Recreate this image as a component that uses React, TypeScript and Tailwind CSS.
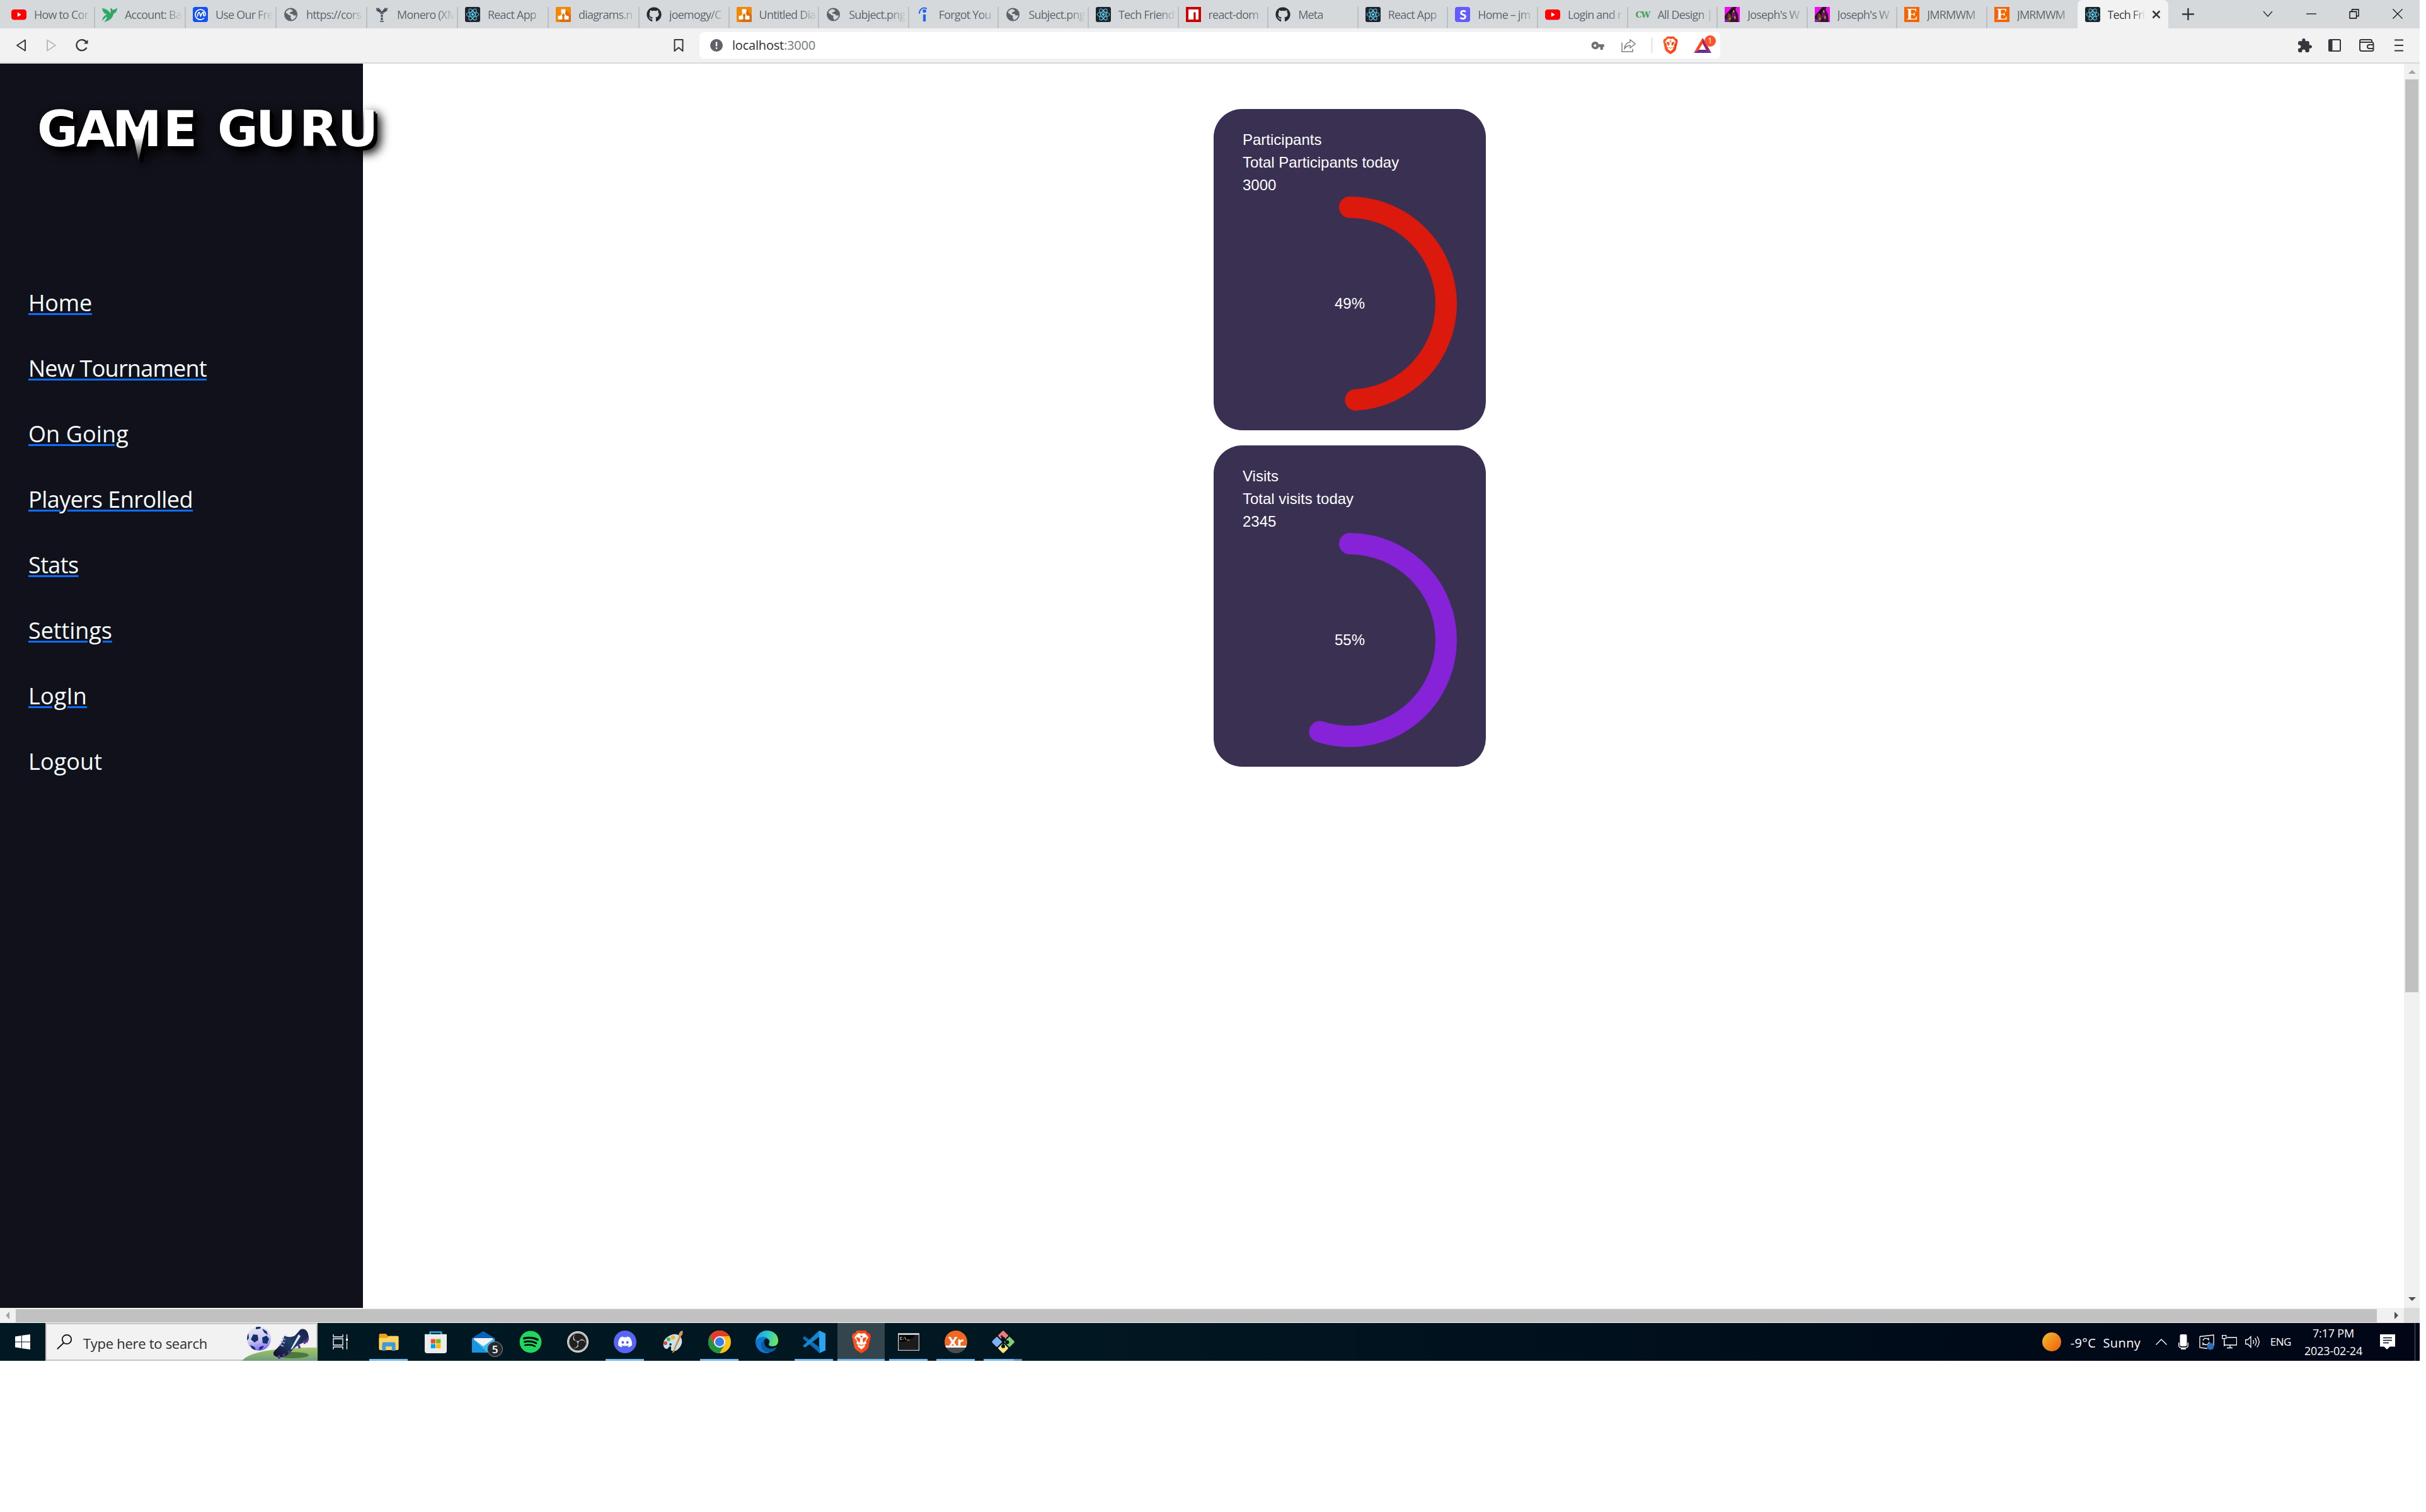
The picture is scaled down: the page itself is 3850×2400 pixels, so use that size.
import React from "react";
import { FaGithub, FaSpotify, FaDiscord } from "react-icons/fa";
import { MdExtension } from "react-icons/md";
import { SiObsstudio } from "react-icons/si";

type IconProps = { className?: string };

const YouTube = () => (
  <svg viewBox="0 0 24 24" className="size-6">
    <rect x="0" y="4" width="24" height="16.5" rx="4.5" fill="#f00" />
    <path d="M9.8 8.6v7.2l6-3.6z" fill="#fff" />
  </svg>
);

const Bird = () => (
  <svg viewBox="0 0 24 24" className="size-6" fill="#2fa866">
    <path d="M0 2c6 1 10 3 13 8 1-3 1-5 0-7 2-2 4 0 3 2l4-1c3-1 4-3 4-3 0 6-3 9-6 10-1 6-5 11-15 13 4-4 5-6 4-9C5 18 3 19 0 22c1-6 4-9 8-10C3 11 1 7 0 2z" />
  </svg>
);

const Coin = () => (
  <svg viewBox="0 0 24 24" className="size-6">
    <rect width="24" height="24" rx="4" fill="#1652f0" />
    <path d="M17.500 18A8 8 0 1 1 20 12c0 2.600-3 3-3 .4V10c0-1.800-1.500-1.800-2-.5l-2.600 5-1.600-5c-.5-1.300-1.600-1.200-2 0L7.300 14.600" fill="none" stroke="#fff" strokeWidth="1.700" strokeLinecap="round" />
  </svg>
);

const Globe = () => (
  <svg viewBox="0 0 24 24" className="size-6">
    <circle cx="11.500" cy="12" r="10.500" fill="#5f6368" />
    <path d="M3.500 8.500c1-2.500 4-4.800 6.500-5 2 .5 4 1 4.500 2.500-.5 2-3 1.500-4.500 3-.5 1.500.5 2 2 2 2.500 0 3.500 1 3.500 2.500H20c-.5 3-3 6.500-6.500 7-2-.3-1-2-2.500-3.500 0-1.500 1-2 .5-3-1.500-.8-3-.5-4-2-1.500-1.800-3-1.500-4-3.500z" fill="#d5d9dc" />
  </svg>
);

const Tree = () => (
  <svg viewBox="0 0 24 24" className="size-6" fill="none" stroke="#45525e">
    <path d="M3 2l7 6M21 2l-7 6M6 1.500l5 6M18 1.500l-5 6M3.500 5l6 3.500M20.500 5l-6 3.500" strokeWidth="1.800" />
    <path d="M12 7v16" strokeWidth="3" strokeDasharray="4 1" />
    <path d="M9 23h6M9 10h6" strokeWidth="1.500" />
  </svg>
);

const ReactMark = () => (
  <svg viewBox="0 0 24 24" className="size-6">
    <rect width="24" height="24" rx="3" fill="#20232a" />
    <g fill="none" stroke="#61dafb" strokeWidth="1">
      <ellipse cx="12" cy="12" rx="10" ry="3.900" />
      <ellipse cx="12" cy="12" rx="10" ry="3.900" transform="rotate(60 12 12)" />
      <ellipse cx="12" cy="12" rx="10" ry="3.900" transform="rotate(120 12 12)" />
    </g>
    <circle cx="12" cy="12" r="2" fill="#61dafb" />
  </svg>
);

const Diagrams = () => (
  <svg viewBox="0 0 24 24" className="size-6">
    <rect width="24" height="24" rx="1.500" fill="#f08705" />
    <path d="M15 4l9 9v9.500a1.500 1.500 0 0 1-1.500 1.500H8l-4-4z" fill="#df6c0c" />
    <path d="M12 8L7 16M12 8l5 8" stroke="#fff" strokeWidth="1.800" />
    <rect x="8.500" y="3.500" width="7" height="6" rx="1" fill="#fff" />
    <rect x="3.500" y="14" width="7" height="6" rx="1" fill="#fff" />
    <rect x="13.500" y="14" width="7" height="6" rx="1" fill="#fff" />
  </svg>
);

const Indeed = () => (
  <svg viewBox="0 0 24 24" className="size-6" fill="none" stroke="#2164f3">
    <path d="M5 10C5 5 10-.5 16 2.500" strokeWidth="2" strokeLinecap="round" />
    <circle cx="13" cy="6.500" r="2.800" fill="#2164f3" stroke="none" />
    <path d="M13 12v11" strokeWidth="4.200" />
  </svg>
);

const Npm = () => (
  <svg viewBox="0 0 24 24" className="size-6">
    <rect width="24" height="24" fill="#cb0000" />
    <path d="M4 4h16v16h-4.500V8.500h-3.200V20H4z" fill="#fff" />
  </svg>
);

const Stripe = () => (
  <span className="flex size-6 items-center justify-center rounded-[4px] bg-[#635bff] font-['Lato'] text-[20px] leading-none font-black text-white">S</span>
);

const CW = () => (
  <span className="flex size-6 items-center justify-center font-['DejaVu_Serif'] text-[13px] leading-none font-bold tracking-[-1.500px] text-[#3f9f58]">CW</span>
);

const Joseph = () => (
  <svg viewBox="0 0 24 24" className="size-6">
    <rect width="24" height="24" fill="#35142c" />
    <path d="M0 0h12L8 5 3 10 0 15zM19 0h5v24h-2l-1-12-4-8z" fill="#f20cf0" />
    <path d="M8 6l4-3 5 2-1 5-5 3-4 5-2-4z" fill="#1b0b12" />
    <path d="M11 8l4-1 3 6-3 6-4-3z" fill="#6e1570" />
    <path d="M5 10l4 1 2 6-3 6H4z" fill="#6b3f28" />
    <path d="M13 5l3 1-1 3-2-1zM7 17l3 1-2 4zM15 14l3 2-2 5z" fill="#c9965a" />
    <path d="M0 18l5 3 3 3H0z" fill="#8a1ab0" />
  </svg>
);

const Etsy = () => (
  <span className="flex size-6 items-center justify-center bg-[#f56400] font-['Liberation_Serif'] text-[26px] leading-none font-bold text-white">E</span>
);

const GitHub = () => <FaGithub className="size-6 text-[#24292f]" />;

const tabs: { title: string; icon: React.FC; wide?: boolean; last?: boolean }[] = [
  { title: "How to Cor", icon: YouTube, wide: true },
  { title: "Account: Ba", icon: Bird, wide: true },
  { title: "Use Our Fre", icon: Coin, wide: true },
  { title: "https://cors", icon: Globe, wide: true },
  { title: "Monero (XM", icon: Tree, wide: true },
  { title: "React App", icon: ReactMark, wide: true },
  { title: "diagrams.n", icon: Diagrams, wide: true },
  { title: "joemogy/C", icon: GitHub },
  { title: "Untitled Dia", icon: Diagrams },
  { title: "Subject.png", icon: Globe },
  { title: "Forgot You", icon: Indeed },
  { title: "Subject.png", icon: Globe },
  { title: "Tech Friend", icon: ReactMark },
  { title: "react-dom", icon: Npm },
  { title: "Meta", icon: GitHub },
  { title: "React App", icon: ReactMark },
  { title: "Home – jm", icon: Stripe },
  { title: "Login and r", icon: YouTube },
  { title: "All Design |", icon: CW },
  { title: "Joseph's W", icon: Joseph },
  { title: "Joseph's W", icon: Joseph },
  { title: "JMRMWM", icon: Etsy },
  { title: "JMRMWM", icon: Etsy, last: true },
];

function TabStrip() {
  return (
    <div className="flex h-[45px] shrink-0 bg-[#d5d9dc] pl-[7px] text-[18px] tracking-[-0.045em] text-[#5f6468]">
      {tabs.map((t, i) => (
        <div
          key={i}
          className={`mt-[11px] flex h-[34px] shrink-0 items-start pl-[11px] ${t.wide ? "w-[144px]" : "w-[142.600px]"} ${t.last ? "" : "border-r-2 border-[#bcc0c3]"}`}
        >
          <t.icon />
          <span className="ml-[12px] h-6 w-[92px] shrink-0 overflow-hidden leading-6 whitespace-nowrap [mask-image:linear-gradient(to_right,black_70%,transparent_100%)]">{t.title}</span>
        </div>
      ))}
      <div className="flex h-[45px] w-[144px] shrink-0 items-start rounded-t-[8px] bg-[#f2f2f2] pt-[11px] pl-[12px] text-[#33383c]">
        <ReactMark />
        <span className="ml-[12px] h-6 w-[60px] overflow-hidden leading-6 whitespace-nowrap [mask-image:linear-gradient(to_right,black_65%,transparent)]">Tech Fri</span>
        <svg viewBox="0 0 14 14" className="mt-[5px] ml-[10px] size-[14px]" stroke="#33383c" strokeWidth="2.500"><path d="M1.500 1.500l11 11M12.500 1.500l-11 11" /></svg>
      </div>
      <svg viewBox="0 0 20 20" className="mt-[13px] ml-[22px] size-[19px] shrink-0" stroke="#33383c" strokeWidth="2.600"><path d="M10 0v20M0 10h20" /></svg>
      <div className="mr-[27px] ml-auto flex h-[43px] items-center gap-[52.600px]">
        <svg viewBox="0 0 16 16" className="size-4" fill="none" stroke="#222" strokeWidth="1.200"><path d="M1 4l7 8 7-8" /></svg>
        <svg viewBox="0 0 16 16" className="size-4" stroke="#000" strokeWidth="1.200"><path d="M0 8h16" /></svg>
        <svg viewBox="0 0 16 16" className="size-4" fill="none" stroke="#000" strokeWidth="1.300"><path d="M1 4.500h10.500V15H1zM4.500 4.500V1H15v10.500h-3.500" /></svg>
        <svg viewBox="0 0 16 16" className="size-4" stroke="#000" strokeWidth="1.200"><path d="M.5.5l15 15M15.500.5l-15 15" /></svg>
      </div>
    </div>
  );
}

const BraveLion = ({ className }: IconProps) => (
  <svg viewBox="0 0 30 36" className={className}>
    <defs>
      <linearGradient id="lion" x1="0" y1="0" x2="1" y2="0"><stop stopColor="#ff5a1f" /><stop offset="1" stopColor="#ff3a0a" /></linearGradient>
    </defs>
    <path d="M8 0h14l3 4 3.500 1L30 10l-1 3-3 14-3 4-8 5-8-5-3-4L1 13l-1-3 1.500-5L5 4z" fill="url(#lion)" />
    <path d="M15 5l5-1 4 4 2 3-4 6 1 3-3 3 1 2-6 5-6-5 1-2-3-3 1-3-4-6 2-3 4-4z" fill="#fff" />
    <path d="M6.500 10.500l6 1.200.5 3.300-1 4.500-3.500-4zM23.500 10.500l-6 1.200-.5 3.300 1 4.500 3.500-4zM10.500 21.500l4.500 1.500 4.500-1.500-1.500 1.800-3 1.200-3-1.200zM13 8l2 .5L17 8l-1 3h-2z" fill="#ff4b15" />
  </svg>
);

function Toolbar() {
  return (
    <div className="flex h-[56px] shrink-0 items-center border-b-2 border-[#d5d9dc] bg-[#f2f2f2] pl-[25px] text-[#33383c]">
      <svg viewBox="0 0 16 20" className="h-5 w-4" fill="none" stroke="currentColor" strokeWidth="2" strokeLinejoin="round"><path d="M15 1.500v17L2 10z" /></svg>
      <svg viewBox="0 0 16 20" className="ml-[33px] h-5 w-4" fill="none" stroke="#b9bbbd" strokeWidth="2" strokeLinejoin="round"><path d="M1 1.500v17L14 10z" /></svg>
      <svg viewBox="0 0 20 20" className="ml-[30px] size-5" fill="none" stroke="currentColor" strokeWidth="2.300"><path d="M17.500 13.500A8.500 8.500 0 1 1 17 5" /><path d="M13 7.500h6.500V1z" fill="currentColor" stroke="none" /></svg>
      <svg viewBox="0 0 16 20" className="ml-[929px] h-5 w-4" fill="none" stroke="currentColor" strokeWidth="2" strokeLinejoin="round"><path d="M1.500 1h13v18L8 13.500 1.500 19z" /></svg>
      <div className="ml-[25px] flex h-[42px] w-[1620px] shrink-0 items-center rounded-[7px] bg-white pl-[17px]">
        <svg viewBox="0 0 20 20" className="size-5"><circle cx="10" cy="10" r="10" fill="#5f6368" /><path d="M10 4.500v7M10 13.300v2.400" stroke="#fff" strokeWidth="2.400" /></svg>
        <span className="ml-[15px] text-[20px] tracking-[-0.010em] text-[#2a2e32]">localhost<span className="text-[#75797c]">:3000</span></span>
        <svg viewBox="0 0 22 14" className="ml-auto h-[13px] w-[21px]" fill="#6e7276"><path fillRule="evenodd" d="M6.500 0a6.500 6.500 0 0 1 6.200 4.500H22v4.600h-2V14h-4.600V9.300h-2.700A6.500 6.500 0 1 1 6.500 0zm0 4.500a2.300 2.300 0 1 0 0 4.600 2.300 2.300 0 0 0 0-4.600z" /></svg>
        <svg viewBox="0 0 23 21" className="ml-[27px] h-[21px] w-[23px]" fill="none" stroke="#7a7e82" strokeWidth="1.500"><path d="M1 5.500V20h17v-4.500M14 1l8 6.500-8 6.500v-3.800c-4 0-6.500 1.500-9 5C5.500 9 9 5.500 14 4.800z" /></svg>
        <span className="ml-[25px] h-6 w-px bg-[#c8cacc]" />
        <BraveLion className="ml-[17px] h-[28px] w-[24px]" />
        <div className="relative mr-[14px] ml-[25px] h-6 w-[28px]">
          <svg viewBox="0 0 28 24" className="h-6 w-[28px]"><path d="M14 0L0 24l8-5 6-10z" fill="#ff4724" /><path d="M0 24h28l-8.500-5H8z" fill="#662d91" /><path d="M14 0l14 24-8.500-5L14 9z" fill="#9e1f63" /></svg>
          <span className="absolute -top-[4px] left-[17px] flex size-[18px] items-center justify-center rounded-full bg-[#fb542b] text-[12px] leading-none text-white">1</span>
        </div>
      </div>
      <div className="mr-[26px] ml-auto flex items-center">
        <MdExtension className="size-[25px]" />
        <svg viewBox="0 0 20 20" className="ml-[25px] size-5" fill="none" stroke="currentColor" strokeWidth="2"><rect x="1" y="1" width="18" height="18" rx="1.500" /><path d="M4 1v18" strokeWidth="5" /></svg>
        <svg viewBox="0 0 24 20" className="ml-[29px] h-5 w-6" fill="none" stroke="currentColor" strokeWidth="2"><path d="M1 3v13a3 3 0 0 0 3 3h16a2.500 2.500 0 0 0 2.500-2.500v-9A2.500 2.500 0 0 0 20 5H3a2 2 0 0 1 0-4h15a2 2 0 0 1 2 2v2M23 9h-7a3 3 0 0 0 0 6h7" /></svg>
        <svg viewBox="0 0 14 20" className="ml-[32px] h-5 w-[14px]" stroke="currentColor" strokeWidth="2"><path d="M0 1.500h14M0 10h14M0 18.500h14" /></svg>
      </div>
    </div>
  );
}

const links = [
  { label: "Home", tracking: "tracking-[-0.2px]" },
  { label: "New Tournament", tracking: "tracking-[-0.75px]" },
  { label: "On Going", tracking: "tracking-[0.1px]" },
  { label: "Players Enrolled", tracking: "tracking-[-0.5px]" },
  { label: "Stats", tracking: "tracking-[-0.6px]" },
  { label: "Settings", tracking: "tracking-[-0.1px]" },
  { label: "LogIn", tracking: "tracking-[0.2px]" },
];

function Sidebar() {
  return (
    <aside className="h-full w-[576px] shrink-0 bg-[#11111b]">
      <svg viewBox="0 0 640 200" className="h-[200px] w-[640px] overflow-visible">
        <defs>
          <linearGradient id="spike" x1="0" y1="0" x2="0" y2="1">
            <stop offset="0.300" stopColor="#fff" />
            <stop offset="1" stopColor="#222" />
          </linearGradient>
        </defs>
        <g className="[filter:drop-shadow(3px_3px_0_#000)_drop-shadow(3px_3px_0_#000)_drop-shadow(5px_5px_8px_#000)]">
          <path d="M209 100h22l-11 55z" fill="url(#spike)" />
          <text y="131" x="59 121 178 259 345 406 475 536" fill="#fff" className="font-['DejaVu_Sans'] text-[79px] font-bold">GAMEGURU</text>
        </g>
      </svg>
      <nav className="mt-[153px] flex flex-col items-start gap-[50px] pl-[45px] text-[36px] text-[#f5ffff]">
        {links.map((l) => (
          <a key={l.label} className={`h-[54px] leading-[54px] underline decoration-[#0d6efd] decoration-[3px] underline-offset-[3px] ${l.tracking}`}>{l.label}</a>
        ))}
        <span className="h-[54px] leading-[54px] tracking-[0.1px]">Logout</span>
      </nav>
    </aside>
  );
}

function StatCard({ title, caption, value, percent, color }: { title: string; caption: string; value: string; percent: number; color: string }) {
  const length = 2 * Math.PI * 153;
  return (
    <section className="h-[510px] w-[432px] rounded-[45px] bg-[#3a3052] px-[46px] pt-[31px] font-['Liberation_Sans'] text-[24px] leading-9 text-white">
      <p>{title}</p>
      <p>{caption}</p>
      <p>{value}</p>
      <div className="grid place-items-center *:[grid-area:1/1]">
        <svg viewBox="0 0 340 340" className="size-[340px] -rotate-90">
          <circle cx="170" cy="170" r="153" fill="none" stroke={color} strokeWidth="34" strokeLinecap="round" strokeDasharray={`${(length * percent) / 100} ${length}`} />
        </svg>
        <span>{percent}%</span>
      </div>
    </section>
  );
}

function VerticalScrollbar() {
  return (
    <div className="flex w-[25px] shrink-0 flex-col items-center bg-[#f1f1f1]">
      <svg viewBox="0 0 12 6" className="mt-[10px] h-[6px] w-3 shrink-0" fill="#a3a3a3"><path d="M0 6l6-6 6 6z" /></svg>
      <div className="mt-[9px] h-[1449px] w-[21px] bg-[#c1c1c1]" />
      <svg viewBox="0 0 12 6" className="mt-auto mb-[11px] h-[6px] w-3 shrink-0" fill="#505050"><path d="M0 0h12L6 6z" /></svg>
    </div>
  );
}

function HorizontalScrollbar() {
  return (
    <div className="flex h-6 shrink-0 items-center bg-[#f1f1f1]">
      <svg viewBox="0 0 6 12" className="ml-[9px] h-3 w-[6px]" fill="#a3a3a3"><path d="M6 0v12L0 6z" /></svg>
      <div className="ml-[10px] h-[21px] w-[3747px] bg-[#c1c1c1]" />
      <svg viewBox="0 0 6 12" className="ml-[28px] h-3 w-[6px]" fill="#505050"><path d="M0 0v12l6-6z" /></svg>
      <div className="ml-auto h-6 w-[25px] bg-[#dcdcdc]" />
    </div>
  );
}

const Folder = ({ className }: IconProps) => (
  <svg viewBox="0 0 32 28" className={className}>
    <path d="M0 2a2 2 0 0 1 2-2h9l4 4h15a2 2 0 0 1 2 2v19H0z" fill="#e8a317" />
    <path d="M0 7h13l4-3h15v21a2 2 0 0 1-2 2H2a2 2 0 0 1-2-2z" fill="#fed45f" />
    <path d="M5 28V17a3 3 0 0 1 3-3h16a3 3 0 0 1 3 3v11h-6v-7H11v7z" fill="#3f97dc" />
  </svg>
);
const Store = ({ className }: IconProps) => (
  <svg viewBox="0 0 36 36" className={className}>
    <path d="M9 7V1.500h18V7" fill="none" stroke="#29a9ea" strokeWidth="2.600" />
    <path d="M0 5h36v27a4 4 0 0 1-4 4H4a4 4 0 0 1-4-4z" fill="#ececec" />
    <path d="M10 13h7.500v7H10z" fill="#f25022" /><path d="M18.500 13H26v7h-7.500z" fill="#7fba00" />
    <path d="M10 21h7.500v7H10z" fill="#00a4ef" /><path d="M18.500 21H26v7h-7.500z" fill="#ffb900" />
  </svg>
);
const Mail = ({ className }: IconProps) => (
  <svg viewBox="0 0 36 34" className={className}>
    <path d="M0 11L18 0l18 11v10H0z" fill="#0a63b8" />
    <path d="M3 11h30v10L18 26 3 20z" fill="#f3f3f3" />
    <path d="M0 11l18 13 18-13v23H0z" fill="#35bdf3" />
    <path d="M0 34V11l25 23z" fill="#1b93e0" />
  </svg>
);
const Paint = ({ className }: IconProps) => (
  <svg viewBox="0 0 36 36" className={className}>
    <path d="M16 7c10-4 19 3 17 13-2 8-10 15-16 12-3-2 1-5-2-7-3-1-3 5-7 4-5-1-9-15 8-22z" fill="#c5e3f1" />
    <circle cx="7" cy="20" r="3" fill="#e04235" /><circle cx="12" cy="14" r="3" fill="#51ae50" /><circle cx="19" cy="11" r="3.300" fill="#f3b51d" /><circle cx="15" cy="22" r="2" fill="#16384d" />
    <path d="M29 8l3 1-12 26-2 1 1-4z" fill="#e88a25" /><path d="M28 8c0-4 2-7 6-8 1 2 1 6-2 9z" fill="#c79a62" />
  </svg>
);
const Chrome = ({ className }: IconProps) => (
  <svg viewBox="0 0 36 36" className={className}>
    <circle cx="18" cy="18" r="18" fill="#fbc116" />
    <path d="M2.400 9A18 18 0 0 0 18 36l7.800-13.500H10.200z" fill="#229342" />
    <path d="M2.400 9l7.800 13.500L18 9h15.600A18 18 0 0 0 2.400 9z" fill="#e33b2e" />
    <circle cx="18" cy="18" r="9" fill="#fff" /><circle cx="18" cy="18" r="7.200" fill="#3a7cec" />
  </svg>
);
const Edge = ({ className }: IconProps) => (
  <svg viewBox="0 0 36 36" className={className}>
    <defs>
      <linearGradient id="edgeTop" x1="0" y1="0.300" x2="1" y2="0.500"><stop stopColor="#1d9fe3" /><stop offset="0.500" stopColor="#2cc5d2" /><stop offset="1" stopColor="#6fe757" /></linearGradient>
    </defs>
    <path d="M0 18C1 7 9 0 18 0c11 0 18 7 18 16 0 6-4 9-9 9-4 0-6-1-6-3s2-2 1-6c-2-5-12-7-22 2z" fill="url(#edgeTop)" />
    <path d="M0 18c3-8 13-10 19-6-6 1-10 7-7 14 3 6 8 8 11 9C11 39 0 30 0 18z" fill="#0f78d0" />
    <path d="M15 14c-5 2-8 8-5 14 4 9 17 9 23 0 1-1 0-2-1-1-6 3-14 2-17-3-1-4-2-7 0-10z" fill="#0c59a4" />
  </svg>
);
const Code = ({ className }: IconProps) => (
  <svg viewBox="0 0 36 36" className={className}>
    <path d="M26 0l10 4.500v27L26 36z" fill="#2aa4ee" />
    <path d="M0 11.500l3-2.500 24 18v9L1 13.500z" fill="#0a6fb8" />
    <path d="M0 24.500L26 0v10L3.500 27z" fill="#1287d0" />
  </svg>
);
const Terminal = ({ className }: IconProps) => (
  <svg viewBox="0 0 34 28" className={className}>
    <rect width="34" height="28" fill="#c3c6c9" /><rect x="1.500" y="3" width="31" height="23.500" fill="#000" />
    <path d="M1.500 14C14 14 22 10 28 3h4.500v23.500h-31z" fill="#1b1b1b" />
    <path d="M6.500 6.500H4v4h2.500M8.500 7.500v.8M8.500 9.800v.8M10.500 6l2.500 5M14.500 11h4" stroke="#ddd" fill="none" />
  </svg>
);
const Xr = ({ className }: IconProps) => (
  <span className={`flex items-center justify-center overflow-hidden rounded-full bg-[linear-gradient(#f26822_0_68%,#fff_68%_76%,#4c4c4c_76%)] font-['Open_Sans'] text-[23px] leading-none font-bold tracking-[-1px] text-white ${className}`}>Xr</span>
);
const GitBash = ({ className }: IconProps) => (
  <svg viewBox="0 0 36 36" className={className}>
    <g transform="rotate(45 18 18)">
      <rect x="5" y="5" width="12.500" height="12.500" rx="2" fill="#f07a80" /><rect x="18.500" y="5" width="12.500" height="12.500" rx="2" fill="#f07a80" />
      <path d="M18.500 5H29a2 2 0 0 1 2 2v10.500H18.500z" fill="#80d070" />
      <rect x="5" y="18.500" width="12.500" height="12.500" rx="2" fill="#7fb2f5" /><rect x="18.500" y="18.500" width="12.500" height="12.500" rx="2" fill="#fde47c" />
    </g>
    <path d="M9 9l18 18M27 9L9 27" stroke="#01151e" strokeWidth="2" />
    <path d="M15 8l3 5v11M18 13l6 5" stroke="#01151e" strokeWidth="2.500" fill="none" />
    <circle cx="18" cy="13" r="3" fill="#01151e" /><circle cx="24.500" cy="18.500" r="3" fill="#01151e" /><circle cx="18" cy="25" r="3" fill="#01151e" />
  </svg>
);
const Spotify = ({ className }: IconProps) => (
  <span className={`flex items-center justify-center rounded-full bg-black ${className}`}><FaSpotify className="size-full text-[#1ed760]" /></span>
);
const Obs = ({ className }: IconProps) => (
  <span className={`flex items-center justify-center rounded-full border-2 border-[#d8d8d8] bg-[#211f20] ${className}`}><SiObsstudio className="size-full text-[#c5c5c7]" /></span>
);
const Discord = ({ className }: IconProps) => (
  <span className={`flex items-center justify-center rounded-full bg-[#5865f2] ${className}`}><FaDiscord className="size-[24px] text-white" /></span>
);

const apps: { icon: React.FC<IconProps>; size: string; open?: boolean; active?: boolean; badge?: string; stacked?: boolean }[] = [
  { icon: Folder, size: "h-[27px] w-[32px]", open: true },
  { icon: Store, size: "h-[35px] w-[35px]" },
  { icon: Mail, size: "h-[34px] w-[36px]", badge: "5" },
  { icon: Spotify, size: "size-9" },
  { icon: Obs, size: "size-[34px]" },
  { icon: Discord, size: "size-9", open: true },
  { icon: Paint, size: "size-9" },
  { icon: Chrome, size: "size-9", open: true },
  { icon: Edge, size: "size-9" },
  { icon: Code, size: "size-9", open: true },
  { icon: BraveLion, size: "h-9 w-[30px]", open: true, active: true },
  { icon: Terminal, size: "h-[28px] w-[34px]", open: true },
  { icon: Xr, size: "size-9", open: true },
  { icon: GitBash, size: "size-9", open: true, stacked: true },
];

function SearchBox() {
  return (
    <div className="flex h-[60px] w-[432px] shrink-0 items-center border-2 border-[#c4c4c4] bg-[#f2f2f2] pl-[16px]">
      <svg viewBox="0 0 24 24" className="size-6" fill="none" stroke="#111" strokeWidth="1.800"><circle cx="16" cy="8" r="7.200" /><path d="M11 13.500L.8 23.500" /></svg>
      <span className="mt-[4px] ml-[18px] text-[22px] tracking-[-0.013em] text-[#2c2c2c]">Type here to search</span>
      <svg viewBox="0 0 120 60" className="-mr-[2px] ml-auto h-[60px] w-[120px] shrink-0">
        <defs>
          <linearGradient id="grass" x1="0" y1="0" x2="0" y2="1"><stop stopColor="#a5c566" /><stop offset="1" stopColor="#6f9f7d" /></linearGradient>
          <linearGradient id="ball" x1="0.300" y1="0" x2="0.500" y2="1"><stop stopColor="#e3e6ee" /><stop offset="0.550" stopColor="#cfc6f2" /><stop offset="1" stopColor="#7d6bf0" /></linearGradient>
          <linearGradient id="boot" x1="0" y1="1" x2="1" y2="0"><stop stopColor="#130b2c" /><stop offset="0.500" stopColor="#1d4064" /><stop offset="1" stopColor="#1b1c48" /></linearGradient>
          <clipPath id="ballClip"><circle cx="27" cy="25" r="19" /></clipPath>
        </defs>
        <path d="M0 60C12 46 48 39 120 39v21z" fill="url(#grass)" />
        <ellipse cx="80" cy="51" rx="26" ry="5" fill="#3d6a2b" opacity="0.800" />
        <circle cx="27" cy="25" r="19" fill="url(#ball)" />
        <g clipPath="url(#ballClip)" fill="#12306e">
          <path d="M18 18l7 1 1 8-6 4-6-5zM32 23l7-3 4 5-3 8-7-1zM22 5l8 1-1 3-7 1zM32 9l7 4 2 6-6-4zM7 17l3-2 1 9-3 4zM13 35l7 3 2 5-6-2zM28 38l7-2-3 5-5 2z" />
        </g>
        <path d="M67 18l2-2 4 3-3 3zM93 10l3-3 5 2-4 3z" fill="#e6e6f5" />
        <path d="M67 20c5 3 14 3 18-1l8-9c6-2 12 1 13 13-1 6-10 8-18 13-10 6-12 16-24 18-8 1-15-1-14-7 4-8 15-11 17-27z" fill="url(#boot)" />
        <path d="M90 18l3 3-13 20-3 1z" fill="#e6e6f5" />
        <path d="M105 24l-3 7M98 28l2 5M89 34l3 6M74 44l2 5M66 49l1 5M59 51v6" stroke="#5a3796" strokeWidth="3.500" />
        <path d="M64 24l5 3M62 29l6 3M60 34l6 3" stroke="#a78be0" strokeWidth="2" />
      </svg>
    </div>
  );
}

function Taskbar() {
  return (
    <footer className="flex h-[60px] shrink-0 bg-[linear-gradient(90deg,#001922,#011721_45%,#000a18_85%,#000616)] text-white">
      <div className="flex w-[72px] shrink-0 items-center justify-center">
        <svg viewBox="0 0 24 24" className="size-6" fill="#fff"><path d="M0 3.400L9.800 2v9.500H0zM10.800 1.800L24 0v11.500H10.800zM0 12.500h9.800V22L0 20.600zM10.800 12.500H24V24l-13.200-1.800z" /></svg>
      </div>
      <SearchBox />
      <div className="flex w-[75px] shrink-0 items-center justify-center pr-[3px]">
        <svg viewBox="0 0 24 24" className="size-6" fill="none" stroke="#fff" strokeWidth="1.300"><path d="M1 0v4h15V0M1 24v-4h15v4M1 7h15v10H1zM22.500 0v6M22.500 12v12" /><path d="M22.500 6.500v4" strokeWidth="3" /></svg>
      </div>
      {apps.map((a, i) => (
        <div key={i} className={`relative flex w-[75px] shrink-0 items-center justify-center ${a.active ? "bg-[#35454d]" : ""}`}>
          <a.icon className={a.size} />
          {a.badge && (
            <span className="absolute top-[29px] left-[44px] flex size-[25px] items-center justify-center rounded-full border border-[#8a8f93] bg-[#262b31] text-[17px] leading-none font-semibold">{a.badge}</span>
          )}
          {a.open && <span className={`absolute bottom-0 h-[3px] bg-[#76b9ed] ${a.active ? "w-full" : "w-[61px]"} ${a.stacked ? "border-r-[13px] border-[#5a8db8]" : ""}`} />}
        </div>
      ))}
      <div className="ml-auto flex items-center">
        <div className="size-[30px] rounded-full bg-[linear-gradient(135deg,#f0c239,#f28a1c_50%,#ef5f06)]" />
        <span className="mt-[4px] ml-[15px] w-[135px] text-[20px] tracking-[0.020em] whitespace-pre">-9°C  Sunny</span>
        <svg viewBox="0 0 18 10" className="h-[10px] w-[18px]" fill="none" stroke="#fff" strokeWidth="1.400"><path d="M.5 9.500L9 1l8.500 8.500" /></svg>
        <svg viewBox="0 0 16 24" className="ml-[18px] h-6 w-4" fill="none" stroke="#fff" strokeWidth="1.400"><rect x="2.500" y="0" width="11" height="19" rx="2" fill="#fff" stroke="none" /><path d="M.7 13v5c0 2 2 3.500 4 3.500h6.600c2 0 4-1.500 4-3.500v-5M8 21v3M4 23.300h8" /></svg>
        <svg viewBox="0 0 26 26" className="ml-[17px] h-[26px] w-[26px]" fill="none" stroke="#fff" strokeWidth="1.300"><path d="M1 4.500L23 2v17M1 4.500V22l12 1.500M6 11c1-4 6-5 9-1.500V6.500M16 13c-1 5-7 6-10 2v3.500" /><circle cx="18" cy="20" r="5.500" fill="#2e6fba" stroke="none" /></svg>
        <svg viewBox="0 0 24 22" className="ml-[10px] h-[22px] w-6" fill="none" stroke="#fff" strokeWidth="1.300"><path d="M8 4h15.500v12H4V9M13 16v4M8 20.500h9M.7.7h6v5h-6zM3.700 6v12" /></svg>
        <svg viewBox="0 0 23 20" className="ml-[13px] h-5 w-[23px]" fill="none" stroke="#fff" strokeWidth="1.300"><path d="M.7 6.500h3.500L9 1.500v17l-4.800-5H.7zM12.500 7c1.500 2 1.500 4 0 6M15.500 4c3 4 3 8 0 12M18.800 1.500c4.500 5.500 4.500 11.500 0 17" /></svg>
        <span className="ml-[17px] text-[17px] tracking-[-0.025em]">ENG</span>
        <div className="ml-[19px] flex w-[96px] flex-col items-center text-[18px] leading-[28px] tracking-[-0.010em] whitespace-nowrap">
          <span>7:17 PM</span>
          <span>2023-02-24</span>
        </div>
        <svg viewBox="0 0 24 24" className="ml-[26px] size-6"><path d="M0 0h24v19.500h-8.500L11 24l-4.500-4.500H0z" fill="#fff" /><path d="M5 5.500h14M5 9.500h14M5 13.500h9" stroke="#01081a" strokeWidth="1.400" /></svg>
        <span className="mr-[7px] ml-[31px] h-[60px] w-px bg-[#5d636e]" />
      </div>
    </footer>
  );
}

export default function App() {
  return (
    <div className="h-[2400px] w-[3850px] overflow-hidden bg-white font-['Open_Sans',sans-serif]">
      <div className="flex h-[2160px] w-[3840px] flex-col">
        <TabStrip />
        <Toolbar />
        <div className="flex h-[1975px] shrink-0">
          <Sidebar />
          <main className="flex grow flex-col items-center pt-[72px]">
            <div className="mr-[107px] flex flex-col gap-6">
              <StatCard title="Participants" caption="Total Participants today" value="3000" percent={49} color="#dc190d" />
              <StatCard title="Visits" caption="Total visits today" value="2345" percent={55} color="#8623d9" />
            </div>
          </main>
          <VerticalScrollbar />
        </div>
        <HorizontalScrollbar />
        <Taskbar />
      </div>
    </div>
  );
}
